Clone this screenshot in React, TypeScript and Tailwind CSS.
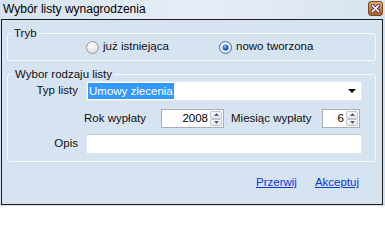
import React from "react"

const font = { fontFamily: '"Liberation Sans", Arial, sans-serif' }

function Radio({ checked }: { checked?: boolean }) {
  return (
    <svg width="13" height="13" viewBox="0 0 13 13" className="shrink-0">
      <defs>
        <radialGradient id={checked ? "rc" : "ru"} cx="0.4" cy="0.35" r="0.7">
          <stop offset="0" stopColor="#ffffff" />
          <stop offset="1" stopColor={checked ? "#d4e3f3" : "#d7d7d7"} />
        </radialGradient>
        <radialGradient id="dot" cx="0.4" cy="0.35" r="0.7">
          <stop offset="0" stopColor="#8fc3f5" />
          <stop offset="0.5" stopColor="#2a6fd0" />
          <stop offset="1" stopColor="#0d3f8f" />
        </radialGradient>
      </defs>
      <circle cx="6.5" cy="6.5" r="6" fill={checked ? "url(#rc)" : "url(#ru)"} stroke={checked ? "#3d6fa5" : "#9a9a9a"} strokeWidth="1" />
      {checked && <circle cx="6.5" cy="6.5" r="3" fill="url(#dot)" />}
    </svg>
  )
}

function SpinButtons() {
  return (
    <div className="flex flex-col w-[12px] h-full">
      <div className="flex-1 flex items-center justify-center border border-[#bcc4cf] rounded-[2px] bg-gradient-to-b from-[#fbfcfd] to-[#e4e9ef]">
        <svg width="5" height="3" viewBox="0 0 5 3"><path d="M0 3 L2.5 0 L5 3 Z" fill="#4e5f7b" /></svg>
      </div>
      <div className="flex-1 flex items-center justify-center border border-[#bcc4cf] rounded-[2px] bg-gradient-to-b from-[#fbfcfd] to-[#e4e9ef]">
        <svg width="5" height="3" viewBox="0 0 5 3"><path d="M0 0 L2.5 3 L5 0 Z" fill="#4e5f7b" /></svg>
      </div>
    </div>
  )
}

function Spin({ value, width }: { value: string; width: string }) {
  return (
    <div className={`flex h-[19px] items-stretch border border-[#abadb3] bg-white p-[1px] ${width}`}>
      <div className="flex-1 flex items-center justify-end pr-[2px] text-[11.5px] text-black">{value}</div>
      <SpinButtons />
    </div>
  )
}

export default function App() {
  return (
    <div className="w-[385px] h-[206px] flex flex-col bg-[#d5e1ee] text-[11.5px] text-[#111]" style={font}>
      {/* title bar */}
      <div className="h-[19px] flex items-start justify-between bg-gradient-to-r from-[#d6e2f0] via-[#e6eef7] to-[#d9e4f1] pl-[3px] pr-[2px]">
        <span className="text-[12px] leading-[18px] text-black">Wybór listy wynagrodzenia</span>
        <div className="mt-[1px] w-[15px] h-[15px] flex items-center justify-center rounded-[3px] border border-[#7a4a22] bg-gradient-to-b from-[#e3aa6e] via-[#c47c3e] to-[#a8602a]">
          <svg width="9" height="9" viewBox="0 0 9 9">
            <path d="M1.5 1.5 L7.5 7.5 M7.5 1.5 L1.5 7.5" stroke="#4a2c6a" strokeWidth="3.2" strokeLinecap="square" />
            <path d="M1.5 1.5 L7.5 7.5 M7.5 1.5 L1.5 7.5" stroke="#ffffff" strokeWidth="1.6" strokeLinecap="square" />
          </svg>
        </div>
      </div>

      {/* client area */}
      <div className="flex-1 ml-[1px] mr-[2px] mb-[1px] border border-[#1d1d1d] bg-[#d6e3f1] flex flex-col">
        <fieldset className="mt-[6px] ml-[5px] mr-[6px] border border-[#f4f8fc] rounded-[3px] pb-[6px]">
          <legend className="ml-[4px] px-[2px] leading-[14px]">Tryb</legend>
          <div className="flex items-center h-[14px] pl-[78px]">
            <label className="flex items-center gap-[4px] w-[133px]">
              <Radio />
              <span>już istniejąca</span>
            </label>
            <label className="flex items-center gap-[4px]">
              <Radio checked />
              <span>nowo tworzona</span>
            </label>
          </div>
        </fieldset>

        <fieldset className="mt-[6px] ml-[5px] mr-[6px] border border-[#f4f8fc] rounded-[3px] pb-[7px]">
          <legend className="ml-[5px] px-[2px] leading-[14px]">Wybor rodzaju listy</legend>
          <div className="flex items-center">
            <span className="w-[70px] text-right">Typ listy</span>
            <div className="ml-[8px] w-[276px] h-[20px] flex items-center justify-between bg-white border border-[#e6ebf1] pl-[1px] pr-[5px]">
              <span className="bg-[#3399ff] text-white px-[1px] leading-[16px]">Umowy zlecenia</span>
              <svg width="8" height="4" viewBox="0 0 8 4"><path d="M0 0 L8 0 L4 4 Z" fill="#000" /></svg>
            </div>
          </div>
          <div className="flex items-center mt-[8px] pl-[76px]">
            <span className="w-[77px]">Rok wypłaty</span>
            <Spin value="2008" width="w-[63px]" />
            <span className="ml-[7px] w-[91px]">Miesiąc wypłaty</span>
            <Spin value="6" width="w-[38px]" />
          </div>
          <div className="flex items-center mt-[6px]">
            <span className="w-[70px] text-right">Opis</span>
            <div className="ml-[8px] w-[276px] h-[20px] bg-white border border-[#dfe5ec] border-t-[#c4cbd4]" />
          </div>
        </fieldset>

        <div className="mt-[13px] flex justify-end gap-[18px] pr-[23px] leading-[14px]">
          <a href="#" className="text-[#0b36d8] underline">Przerwij</a>
          <a href="#" className="text-[#0b36d8] underline">Akceptuj</a>
        </div>
      </div>
    </div>
  )
}
